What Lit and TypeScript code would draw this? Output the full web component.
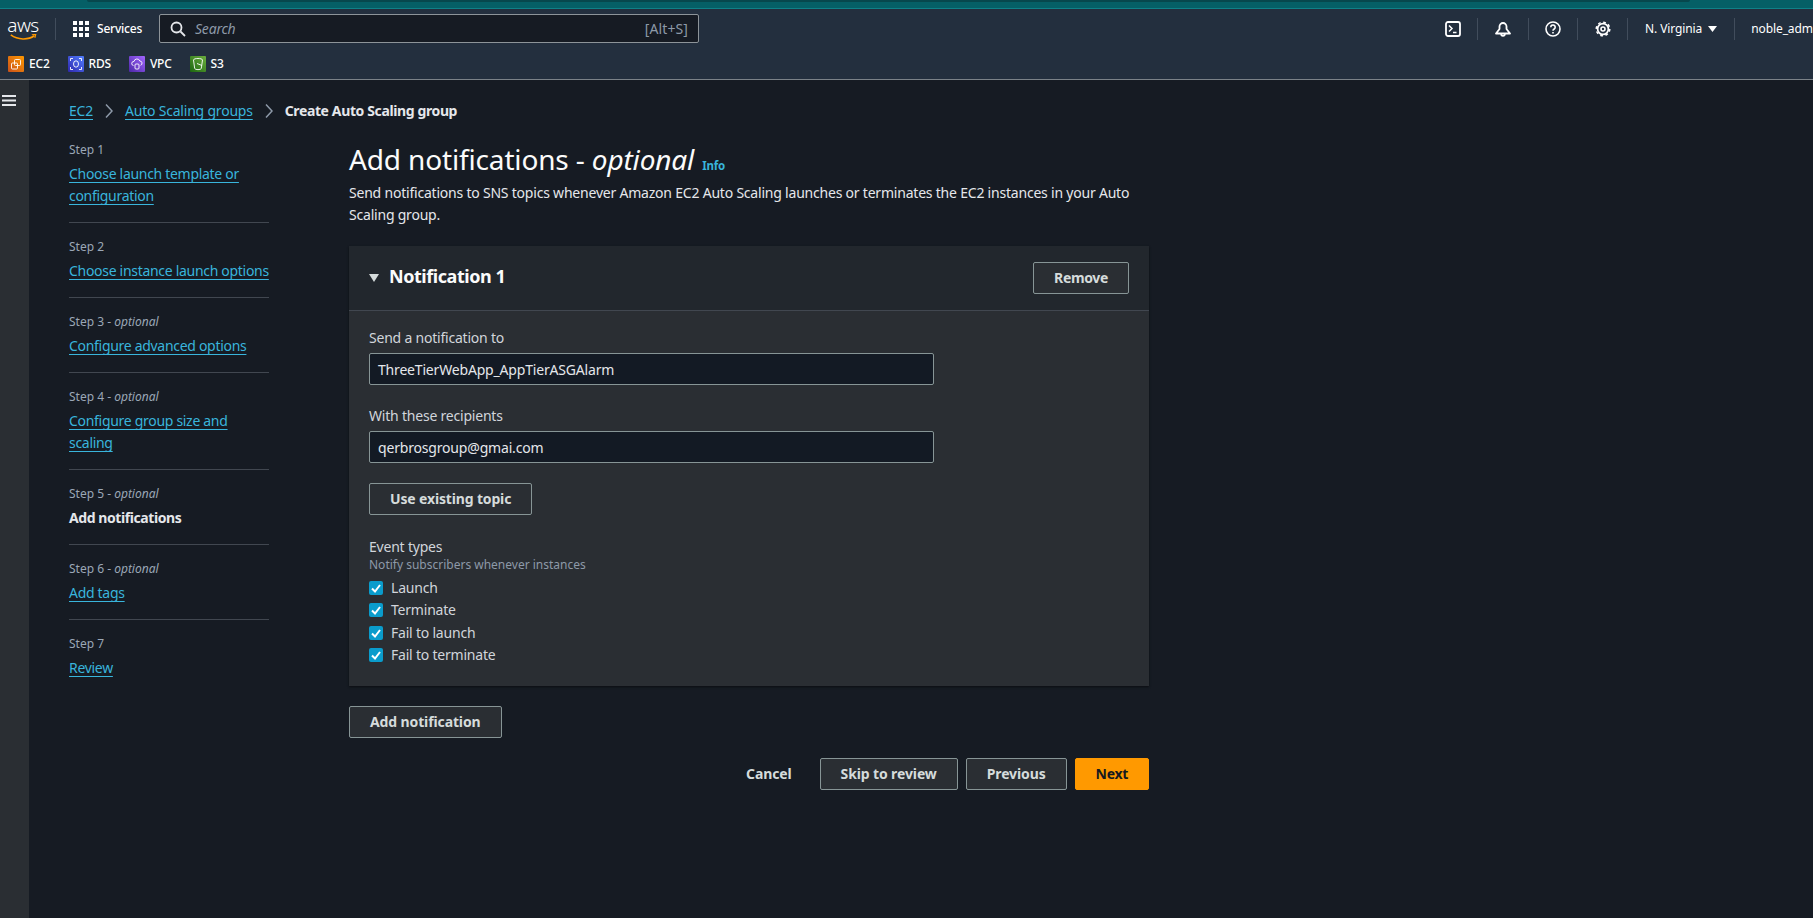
import { LitElement, html, css, svg } from 'lit'
import { customElement } from 'lit/decorators.js'

const steps = [
  { label: 'Step 1', title: 'Choose launch template or<br>configuration' },
  { label: 'Step 2', title: 'Choose instance launch options' },
  { label: 'Step 3', optional: true, title: 'Configure advanced options' },
  { label: 'Step 4', optional: true, title: 'Configure group size and<br>scaling' },
  { label: 'Step 5', optional: true, title: 'Add notifications', current: true },
  { label: 'Step 6', optional: true, title: 'Add tags' },
  { label: 'Step 7', title: 'Review' },
]

const shortcuts = [
  { name: 'EC2', cls: 'ec2', icon: svg`<rect x="6.500" y="3.500" width="6" height="6" rx="1"/><rect x="3.500" y="7" width="6" height="6" rx="1"/>` },
  { name: 'RDS', cls: 'rds', icon: svg`<ellipse cx="8" cy="8" rx="2.500" ry="3.200"/><path d="M2.500 5v-2.500h2.500M13.500 5v-2.500h-2.500M2.500 11v2.500h2.500M13.500 11v2.500h-2.500"/>` },
  { name: 'VPC', cls: 'vpc', icon: svg`<path d="M4.500 9.500a2 2 0 0 1 .5-4 3 3 0 0 1 5.800-.5 2.200 2.200 0 0 1 .7 4.300"/><rect x="6" y="8" width="4" height="5" rx="1"/>` },
  { name: 'S3', cls: 's3', icon: svg`<path d="M3.500 4c0-2 9-2 9 0l-1.200 8.500c-.4 1.500-6.200 1.500-6.600 0z"/><path d="M7 7.500l5 2"/>` },
]

const events = ['Launch', 'Terminate', 'Fail to launch', 'Fail to terminate']

@customElement('app-root')
export class AppRoot extends LitElement {
  static styles = css`
    :host {
      display: block;
      width: 1813px;
      height: 918px;
      overflow: hidden;
      background: #161b23;
      color: #d1d5db;
      font-family: 'Noto Sans', sans-serif;
      font-size: 14px;
      line-height: 22px;
      letter-spacing: -0.21px;
    }

    a {
      color: #39b5dc;
      text-decoration: underline;
      text-underline-offset: 3px;
      text-decoration-thickness: 1px;
    }

    .strip {
      height: 9px;
      box-sizing: border-box;
      background: #055f66;
      border-bottom: 1px solid #0f8088;
    }

    .strip div {
      height: 2px;
      margin: 0 123px 0 87px;
      background: #07474d;
      border-radius: 0 0 4px 4px;
    }

    .nav {
      height: 71px;
      box-sizing: border-box;
      background: #232f3e;
      border-bottom: 1px solid #7b8288;
      color: #fff;
      overflow: hidden;
    }

    .nav-top {
      height: 39px;
      display: flex;
      align-items: center;
      white-space: nowrap;
    }

    .logo {
      width: 32px;
      margin-left: 7px;
      height: 24px;
      flex: none;
      display: flex;
      flex-direction: column;
      align-items: center;
      font-size: 19px;
      line-height: 17px;
      font-family: 'Noto Sans', sans-serif;
      font-weight: 300;
      letter-spacing: -0.6px;
    }

    .logo svg {
      display: block;
    }

    .sep {
      width: 1px;
      height: 22px;
      background: #414d5c;
      flex: none;
    }

    .services {
      display: flex;
      align-items: center;
      gap: 8px;
      width: 86px;
      flex: none;
      margin-left: 17px;
      font-size: 12px;
      font-weight: 500;
    }

    .search {
      width: 540px;
      height: 29px;
      flex: none;
      box-sizing: border-box;
      display: flex;
      align-items: center;
      background: #161b23;
      border: 1px solid #8d9499;
      border-radius: 2px;
      padding: 0 10px;
      gap: 9px;
      font-size: 14px;
      color: #8d99a8;
    }

    .search i {
      flex: 1;
    }

    .search span {
      letter-spacing: 0.1px;
    }

    .actions {
      margin-left: 746px;
      display: flex;
      align-items: center;
      flex: none;
      font-size: 12px;
      letter-spacing: -0.1px;
    }

    .actions svg {
      display: block;
      flex: none;
    }

    .action {
      width: 16px;
    }

    .region {
      display: flex;
      align-items: center;
      gap: 6px;
    }

    .nav-bottom {
      display: flex;
      align-items: center;
      height: 31px;
      padding-left: 8px;
      font-size: 12px;
      font-weight: 500;
      white-space: nowrap;
    }

    .shortcut {
      display: flex;
      align-items: center;
      gap: 5px;
      margin-right: 18px;
    }

    .badge {
      width: 16px;
      height: 16px;
      display: block;
      fill: none;
      stroke: #fff;
      stroke-width: 0.9;
      border-radius: 1px;
    }

    .ec2 { background: linear-gradient(45deg, #c8511b, #ff9900); }
    .rds { background: linear-gradient(45deg, #2e27ad, #527fff); }
    .vpc { background: linear-gradient(45deg, #4d27a8, #a166ff); }
    .s3 { background: linear-gradient(45deg, #1b660f, #6cae3e); }

    .body {
      display: flex;
      height: 839px;
    }

    .rail {
      width: 29px;
      flex: none;
      background: #2a2e33;
      padding-top: 15px;
      box-sizing: border-box;
    }

    .rail svg {
      display: block;
      margin-left: 2px;
    }

    .page {
      flex: 1;
      padding: 20px 0 0 40px;
    }

    .crumbs {
      display: flex;
      align-items: center;
      height: 22px;
      white-space: nowrap;
    }

    .crumbs svg {
      margin: 0 12px;
      display: block;
    }

    .crumbs b {
      color: #e5e7eb;
      font-weight: 700;
      letter-spacing: -0.38px;
    }

    .columns {
      display: flex;
      margin-top: 17px;
    }

    .steps {
      width: 200px;
      flex: none;
      margin-right: 80px;
      white-space: nowrap;
      letter-spacing: -0.3px;
    }

    .step {
      padding-bottom: 15px;
      margin-bottom: 13px;
      border-bottom: 1px solid #414750;
    }

    .step:last-child {
      border: none;
    }

    .step small {
      display: block;
      font-size: 12px;
      line-height: 22px;
      margin-bottom: 2px;
      color: #9ba7b6;
      letter-spacing: 0;
    }

    .step b {
      color: #e5e7eb;
      font-weight: 700;
      letter-spacing: -0.42px;
    }

    .main {
      width: 800px;
      flex: none;
    }

    h1 {
      margin: 0;
      height: 40px;
      font-size: 28px;
      line-height: 40px;
      font-weight: 400;
      color: #fbfbfb;
      letter-spacing: -0.15px;
      display: flex;
      align-items: baseline;
      gap: 8px;
    }

    h1 a {
      font-size: 11.5px;
      line-height: 1;
      font-weight: 700;
      letter-spacing: -0.2px;
      text-decoration: none;
    }

    h1 em {
      font-style: italic;
    }

    .desc {
      margin: 3px 0 20px;
      color: #e5e7eb;
    }

    .card {
      background: #2a2e33;
      box-shadow: 0 1px 2px #0b0e12;
    }

    .card-head {
      height: 65px;
      box-sizing: border-box;
      background: #22272d;
      border-bottom: 1px solid #414750;
      display: flex;
      align-items: center;
      padding: 0 20px;
    }

    .card-head svg {
      margin-right: 10px;
    }

    .card-head h2 {
      margin: 0;
      flex: 1;
      font-size: 18px;
      font-weight: 700;
      letter-spacing: -0.45px;
      color: #fbfbfb;
      position: relative;
      top: -2px;
    }

    .card-head button {
      letter-spacing: -0.35px;
    }

    button {
      font: inherit;
      font-weight: 700;
      letter-spacing: -0.12px;
      height: 32px;
      line-height: 20px;
      box-sizing: border-box;
      padding: 0 20px;
      background: #2a2e33;
      border: 1px solid #879596;
      border-radius: 2px;
      color: #d5dbdb;
      white-space: nowrap;
    }

    .form {
      padding: 16px 20px 20px;
    }

    label.title {
      display: block;
      line-height: 22px;
      margin-bottom: 4px;
    }

    .input {
      width: 565px;
      height: 32px;
      box-sizing: border-box;
      background: #131a24;
      border: 1px solid #879596;
      border-radius: 2px;
      padding: 0 8px;
      line-height: 31px;
      color: #e5e7eb;
      letter-spacing: -0.18px;
      margin-bottom: 20px;
    }

    .form button {
      display: block;
      margin-bottom: 21px;
      letter-spacing: -0.15px;
    }

    .hint {
      font-size: 12px;
      line-height: 14px;
      color: #8d99a8;
      letter-spacing: 0;
      margin: 0 0 5px;
    }

    .check {
      display: flex;
      align-items: center;
      height: 22.3px;
      gap: 8px;
    }

    .check svg {
      display: block;
      width: 14px;
      height: 14px;
      flex: none;
    }

    .add {
      display: block;
      margin-top: 20px;
    }

    .footer {
      display: flex;
      justify-content: flex-end;
      align-items: center;
      gap: 8px;
      margin-top: 20px;
    }

    .cancel {
      background: none;
      border: none;
      color: #d5dbdb;
      padding: 0;
      margin-right: 20px;
    }

    .next {
      background: #ff9900;
      border-color: #ff9900;
      color: #16191f;
      letter-spacing: -0.3px;
    }
  `

  renderStep(step: (typeof steps)[number]) {
    const lines = step.title.split('<br>')
    return html`
      <div class="step">
        <small>${step.label}${step.optional ? html` - <i>optional</i>` : ''}</small>
        ${step.current
          ? html`<b>${step.title}</b>`
          : lines.map((line, i) => html`<a href="#">${line}</a>${i < lines.length - 1 ? html`<br />` : ''}`)}
      </div>
    `
  }

  renderTopBar() {
    return html`
      <div class="strip"><div></div></div>
      <div class="nav">
        <div class="nav-top">
          <div class="logo">
            aws
            <svg width="31" height="8" viewBox="0 0 31 8" fill="none">
              <path d="M1 1c8 6 20 6 27 1" stroke="#ff9900" stroke-width="1.800" />
              <path d="M25 .8l4.500-.3-1 4" stroke="#ff9900" stroke-width="1.300" />
            </svg>
          </div>
          <div class="sep" style="margin-left:16px"></div>
          <div class="services">
            <svg width="16" height="16" viewBox="0 0 16 16" fill="#fff">
              ${[0, 6, 12].flatMap((x) =>
                [0, 6, 12].map((y) => svg`<rect x=${x} y=${y} width="4" height="4" />`),
              )}
            </svg>
            Services
          </div>
          <div class="search">
            <svg width="16" height="16" viewBox="0 0 16 16" fill="none" stroke="#e5e7eb" stroke-width="1.800">
              <circle cx="6.500" cy="6.500" r="5" />
              <path d="M10.500 10.500l4.500 4.500" />
            </svg>
            <i>Search</i>
            <span>[Alt+S]</span>
          </div>
          <div class="actions">
            <svg class="action" height="16" viewBox="0 0 16 16" fill="none" stroke="#fff" stroke-width="1.800">
              <rect x="1" y="1" width="14" height="14" rx="2" />
              <path d="M4 4.500l3 3-3 3M8 11.500h3.500" stroke-width="1.500" />
            </svg>
            <div class="sep" style="margin:0 17px 0 16px"></div>
            <svg class="action" height="16" viewBox="0 0 16 16" fill="none" stroke="#fff" stroke-width="1.800">
              <path d="M1 12.500L4.500 8V5.500a3.500 3.500 0 0 1 7 0V8l3.500 4.500z" stroke-linejoin="round" />
              <path d="M6.200 13a1.800 1.800 0 0 0 3.600 0" />
            </svg>
            <div class="sep" style="margin:0 16px 0 17px"></div>
            <svg class="action" height="16" viewBox="0 0 16 16" fill="none" stroke="#fff" stroke-width="1.600">
              <circle cx="8" cy="8" r="7" />
              <path d="M5.800 6.200a2.200 2.200 0 1 1 3.400 1.800c-.8.500-1.200 1-1.200 1.800M8 11v1.500" />
            </svg>
            <div class="sep" style="margin:0 17px 0 16px"></div>
            <svg class="action" height="16" viewBox="0 0 16 16" fill="none" stroke="#fff" stroke-width="1.800">
              <circle cx="8" cy="8" r="5.400" />
              <circle cx="8" cy="8" r="6.800" stroke-width="1.500" stroke-dasharray="2.700 2.640" />
              <circle cx="8" cy="8" r="2" stroke-width="1.600" />
            </svg>
            <div class="sep" style="margin:0 17px 0 16px"></div>
            <div class="region">
              N. Virginia
              <svg width="9" height="6" viewBox="0 0 9 6" fill="#fff"><path d="M0 0h9L4.500 6z" /></svg>
            </div>
            <div class="sep" style="margin:0 16px 0 17px"></div>
            <span>noble_admin</span>
          </div>
        </div>
        <div class="nav-bottom">
          ${shortcuts.map(
            (s) => html`
              <div class="shortcut">
                <svg class="badge ${s.cls}" viewBox="0 0 16 16">${s.icon}</svg>
                ${s.name}
              </div>
            `,
          )}
        </div>
      </div>
    `
  }

  renderCard() {
    return html`
      <div class="card">
        <div class="card-head">
          <svg width="10" height="8" viewBox="0 0 10 8" fill="#d5dbdb"><path d="M0 0h10L5 8z" /></svg>
          <h2>Notification 1</h2>
          <button>Remove</button>
        </div>
        <div class="form">
          <label class="title">Send a notification to</label>
          <div class="input">ThreeTierWebApp_AppTierASGAlarm</div>
          <label class="title">With these recipients</label>
          <div class="input">qerbrosgroup@gmai.com</div>
          <button>Use existing topic</button>
          <label class="title" style="margin:0">Event types</label>
          <div class="hint">Notify subscribers whenever instances</div>
          ${events.map(
            (name) => html`
              <div class="check">
                <svg viewBox="0 0 14 14">
                  <rect width="14" height="14" rx="2" fill="#0a9ccc" />
                  <path d="M3 7.500l3 3 5-6.500" fill="none" stroke="#fff" stroke-width="2" />
                </svg>
                ${name}
              </div>
            `,
          )}
        </div>
      </div>
    `
  }

  render() {
    return html`
      ${this.renderTopBar()}
      <div class="body">
        <div class="rail">
          <svg width="14" height="11" viewBox="0 0 14 11" fill="#e5e7eb">
            <rect width="14" height="2" />
            <rect y="4.500" width="14" height="2" />
            <rect y="9" width="14" height="2" />
          </svg>
        </div>
        <div class="page">
          <div class="crumbs">
            <a href="#">EC2</a>
            <svg width="8" height="16" viewBox="0 0 8 16" fill="none" stroke="#8d99a8" stroke-width="1.500"><path d="M1 1.500L7 8l-6 6.500" /></svg>
            <a href="#">Auto Scaling groups</a>
            <svg width="8" height="16" viewBox="0 0 8 16" fill="none" stroke="#8d99a8" stroke-width="1.500"><path d="M1 1.500L7 8l-6 6.500" /></svg>
            <b>Create Auto Scaling group</b>
          </div>
          <div class="columns">
            <div class="steps">${steps.map((s) => this.renderStep(s))}</div>
            <div class="main">
              <h1><span>Add notifications - <em>optional</em></span><a href="#">Info</a></h1>
              <p class="desc">
                Send notifications to SNS topics whenever Amazon EC2 Auto Scaling launches or terminates the EC2
                instances in your Auto Scaling group.
              </p>
              ${this.renderCard()}
              <button class="add">Add notification</button>
              <div class="footer">
                <button class="cancel">Cancel</button>
                <button>Skip to review</button>
                <button>Previous</button>
                <button class="next">Next</button>
              </div>
            </div>
          </div>
        </div>
      </div>
    `
  }
}
